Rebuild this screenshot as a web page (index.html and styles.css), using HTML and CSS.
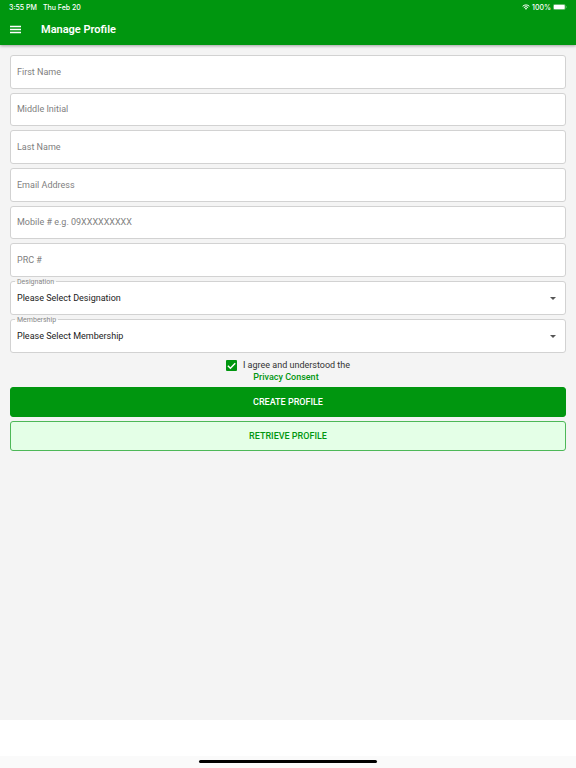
FILE: index.html
```html
<!DOCTYPE html>
<html lang="en">
  <head>
    <meta charset="utf-8">
    <meta name="viewport" content="width=device-width, initial-scale=1">
    <title>Manage Profile</title>
    <link rel="stylesheet" href="styles.css">
  </head>
  <body>
    <!-- Header -->
    <header class="app-header">
      <div class="status-bar">
        <span>3:55 PM</span>
        <span>Thu Feb 20</span>
        <span class="status-right">
          <svg class="wifi" viewBox="0 0 16 12" aria-hidden="true">
            <path d="M1.2 4.6a9.8 9.8 0 0 1 13.6 0M3.7 7.2a6.2 6.2 0 0 1 8.6 0" fill="none" stroke="#fff" stroke-width="2"/>
            <path d="M8 11.6 5.6 9.2a3.5 3.5 0 0 1 4.8 0z" fill="#fff"/>
          </svg>
          <span>100%</span>
          <svg class="battery" viewBox="0 0 28 12" aria-hidden="true">
            <rect x=".5" y=".5" width="24" height="11" rx="3" fill="none" stroke="#fff" stroke-opacity=".5"/>
            <rect x="1.5" y="1.5" width="22" height="9" rx="2" fill="#fff"/>
            <path d="M26 4c1.6.5 1.6 3.500 0 4z" fill="#fff" fill-opacity=".6"/>
          </svg>
        </span>
      </div>
      <div class="toolbar">
        <button class="menu-button" type="button" aria-label="Menu">
          <svg viewBox="0 0 11 9" aria-hidden="true">
            <path d="M0 1.500h11M0 4.500h11M0 7.500h11" stroke="#fff" stroke-width="1.3"/>
          </svg>
        </button>
        <h1>Manage Profile</h1>
      </div>
    </header>

    <!-- Profile form -->
    <main>
      <form class="profile-form">
        <div class="text-fields">
          <input type="text" placeholder="First Name" aria-label="First Name">
          <input type="text" placeholder="Middle Initial" aria-label="Middle Initial">
          <input type="text" placeholder="Last Name" aria-label="Last Name">
          <input type="email" placeholder="Email Address" aria-label="Email Address">
          <input type="tel" placeholder="Mobile # e.g. 09XXXXXXXXX" aria-label="Mobile #">
          <input type="text" placeholder="PRC #" aria-label="PRC #">
        </div>

        <div class="select-field">
          <label for="designation">Designation</label>
          <select id="designation">
            <option>Please Select Designation</option>
          </select>
          <svg class="arrow" viewBox="0 0 6 3" aria-hidden="true"><path d="M0 0h6L3 3z"/></svg>
        </div>
        <div class="select-field">
          <label for="membership">Membership</label>
          <select id="membership">
            <option>Please Select Membership</option>
          </select>
          <svg class="arrow" viewBox="0 0 6 3" aria-hidden="true"><path d="M0 0h6L3 3z"/></svg>
        </div>

        <div class="consent">
          <div class="consent-check">
            <input type="checkbox" id="agree" checked>
            <label for="agree">I agree and understood the</label>
          </div>
          <a href="#">Privacy Consent</a>
        </div>

        <button class="btn btn-create" type="submit">CREATE PROFILE</button>
        <button class="btn btn-retrieve" type="button">RETRIEVE PROFILE</button>
      </form>
    </main>

    <footer>
      <div class="home-area">
        <div class="home-indicator"></div>
      </div>
    </footer>
  </body>
</html>
```

FILE: styles.css
```css
* {
  box-sizing: border-box;
}

body {
  margin: 0;
  min-height: 100vh;
  display: flex;
  flex-direction: column;
  font-family: Roboto, "Liberation Sans", sans-serif;
  font-size: 9px;
  color: #333;
  background: #fff;
}

/* Header */
.app-header {
  position: relative;
  color: #fff;
  background: #00960f;
  box-shadow: 0 1px 3px rgba(0, 0, 0, 0.35);
}

.status-bar {
  display: flex;
  align-items: center;
  gap: 6px;
  height: 14px;
  padding: 0 9px;
  font-family: Inter, Roboto, sans-serif;
  font-size: 7px;
  font-weight: 500;
}

.status-right {
  display: flex;
  align-items: center;
  gap: 2px;
  margin-left: auto;
}

.wifi {
  width: 8px;
  height: 6px;
}

.battery {
  width: 14px;
  height: 6px;
}

.toolbar {
  display: flex;
  align-items: center;
  gap: 20px;
  height: 31px;
  padding: 0 10px;
}

.menu-button {
  display: flex;
  padding: 0;
  border: 0;
  background: none;
}

.menu-button svg {
  width: 11px;
  height: 9px;
}

h1 {
  margin: 0;
  font-size: 11px;
  font-weight: 600;
}

/* Form */
main {
  flex: 1;
  background: #f4f4f4;
}

.profile-form {
  display: flex;
  flex-direction: column;
  gap: 4px;
  padding: 10px;
}

.text-fields {
  display: grid;
  grid-auto-rows: 1fr;
  gap: 4px;
  min-height: 222px;
}

.text-fields input,
.select-field select {
  width: 100%;
  padding: 0 6px;
  border: 1px solid #d2d2d2;
  border-radius: 3px;
  font: inherit;
  color: #222;
  background: #fff;
}

.text-fields input::placeholder {
  color: #808080;
  opacity: 1;
}

.select-field {
  position: relative;
}

.select-field select {
  display: block;
  height: 34px;
  appearance: none;
}

/* Label sits over the top border */
.select-field label {
  position: absolute;
  top: -3px;
  left: 5px;
  padding: 0 2px;
  font-size: 7px;
  line-height: 8px;
  color: #888;
  background: linear-gradient(#f4f4f4 50%, #fff 50%);
}

.arrow {
  position: absolute;
  top: 16px;
  right: 10px;
  width: 6px;
  height: 3px;
  fill: #555;
  pointer-events: none;
}

/* Consent */
.consent {
  display: flex;
  flex-direction: column;
  align-items: center;
  padding-top: 2px;
  line-height: 12px;
}

.consent-check {
  display: flex;
  align-items: center;
  gap: 6px;
}

.consent input {
  appearance: none;
  width: 11px;
  height: 11px;
  margin: 0;
  border-radius: 1px;
  background: #00960f url("data:image/svg+xml,%3Csvg xmlns='http://www.w3.org/2000/svg' viewBox='0 0 10 10'%3E%3Cpath d='M1.7 5.2 4 7.500 8.4 3' fill='none' stroke='white' stroke-width='1.3'/%3E%3C/svg%3E");
}

.consent a {
  padding-right: 4px;
  font-weight: 500;
  color: #00960f;
  text-decoration: none;
}

/* Buttons */
.btn {
  height: 30px;
  border: 1px solid #00960f;
  border-radius: 3px;
  font: inherit;
  font-weight: 500;
}

.btn-create {
  color: #fff;
  background: #00960f;
}

.btn-retrieve {
  color: #00960f;
  border-color: #4db858;
  background: #e4ffe7;
}

/* Bottom bar */
footer {
  padding-top: 36px;
}

.home-area {
  height: 12px;
  padding-top: 4px;
  background: #fafafa;
}

.home-indicator {
  width: 31%;
  height: 3px;
  margin: 0 auto;
  border-radius: 2px;
  background: #000;
}
```
